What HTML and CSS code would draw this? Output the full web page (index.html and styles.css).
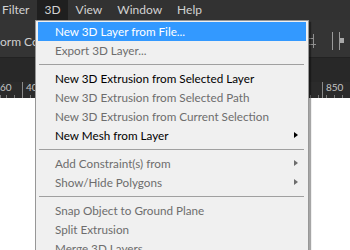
FILE: index.html
```html
<!DOCTYPE html>
<html lang="en">
<head>
    <meta charset="UTF-8">
    <meta name="viewport" content="width=device-width, initial-scale=1.0">
    <title>3D Menu</title>
    <link rel="stylesheet" href="styles.css">
</head>
<body>
    <div class="app">
        <div class="menubar">
            <span class="mb-item first">Filter</span>
            <span class="mb-item active">3D</span>
            <span class="mb-item">View</span>
            <span class="mb-item">Window</span>
            <span class="mb-item">Help</span>
        </div>

        <div class="options">
            <span class="opt-label">orm Controls</span>
            <div class="opt-icons">
                <svg class="icon-a" width="10" height="16" viewBox="0 0 10 16">
                    <path d="M6.5 1v14M1 5.5h5M1 11.5h8" stroke="#8f8f8f" stroke-width="1" fill="none"/>
                </svg>
                <svg class="icon-b" width="14" height="18" viewBox="0 0 14 18">
                    <path d="M1.5 0v18M8.5 0v18" stroke="#9a9a9a" stroke-width="1" fill="none"/>
                    <rect x="9" y="6" width="4" height="5" fill="#a8a8a8"/>
                </svg>
            </div>
        </div>

        <div class="tabs"></div>

        <div class="ruler">
            <span class="mark first" style="left: 0">60</span>
            <span class="mark" style="left: 22px">40</span>
            <span class="mark" style="left: 322px">850</span>
        </div>

        <div class="canvas"></div>

        <!-- dropdown for the 3D menu -->
        <div class="menu">
            <div class="item hover">New 3D Layer from File...</div>
            <div class="item disabled">Export 3D Layer...</div>
            <div class="sep"></div>
            <div class="item">New 3D Extrusion from Selected Layer</div>
            <div class="item disabled">New 3D Extrusion from Selected Path</div>
            <div class="item disabled">New 3D Extrusion from Current Selection</div>
            <div class="item sub">New Mesh from Layer</div>
            <div class="sep"></div>
            <div class="item disabled sub">Add Constraint(s) from</div>
            <div class="item disabled sub">Show/Hide Polygons</div>
            <div class="sep"></div>
            <div class="item disabled">Snap Object to Ground Plane</div>
            <div class="item disabled">Split Extrusion</div>
            <div class="item disabled">Merge 3D Layers</div>
        </div>
    </div>
</body>
</html>
```

FILE: styles.css
```css
body {
    margin: 0;
    width: 350px;
    height: 250px;
    overflow: hidden;
    background-color: #fff;
    font-family: Lato, "Noto Sans", sans-serif;
    font-size: 12px;
}

.app {
    position: relative;
    width: 350px;
    height: 250px;
    display: flex;
    flex-direction: column;
}

/* Top menu bar */
.menubar {
    height: 20px;
    background-color: #323232;
    display: flex;
    align-items: stretch;
    color: #d2d2d2;
    font-size: 12px;
}

.mb-item {
    padding: 0 7px;
    line-height: 19px;
    margin-right: 1px;
}

.mb-item.first {
    margin-left: -5px;
}

.mb-item.active {
    background-color: #1f1f1f;
}

/* Options bar */
.options {
    height: 37px;
    background-color: #343434;
    border-bottom: 1px solid #222;
    display: flex;
    align-items: center;
    justify-content: space-between;
    color: #cfcfcf;
}

.opt-label {
    margin-top: 6px;
    white-space: nowrap;
}

.opt-icons {
    display: flex;
    align-items: center;
    gap: 14px;
    margin-right: 5px;
    margin-top: 4px;
}

.tabs {
    height: 24px;
    background-color: #282828;
}

/* Ruler */
.ruler {
    position: relative;
    height: 16px;
    background-color: #2b2b2b;
    background-image: repeating-linear-gradient(to right, #7a7a7a 0 1px, transparent 1px 8px);
    background-size: 100% 3px;
    background-position: 6px 100%;
    background-repeat: repeat-x;
    color: #c4c4c4;
    font-size: 10px;
}

.mark {
    position: absolute;
    top: 0;
    height: 16px;
    padding-left: 3px;
    border-left: 1px solid #8a8a8a;
    line-height: 11px;
}

.mark.first {
    padding-left: 0;
    border-left: none;
}

.canvas {
    flex: 1;
    background-color: #fff;
}

/* Dropdown menu */
.menu {
    position: absolute;
    left: 35px;
    top: 20px;
    width: 268px;
    padding: 1px 2px 2px 2px;
    background-color: #f0f0f0;
    border: 1px solid #979797;
    box-shadow: 2px 2px 1px rgba(0, 0, 0, 0.35);
    font-size: 11.7px;
}

.item {
    height: 19px;
    line-height: 19px;
    padding: 0 8px 0 17px;
    color: #000;
    white-space: nowrap;
    position: relative;
}

.item.hover {
    background-color: #3399ff;
    color: #fff;
}

.item.disabled {
    color: #6d6d6d;
}

.item.sub::after {
    content: "";
    position: absolute;
    right: 8px;
    top: 6px;
    border-left: 4px solid #000;
    border-top: 3.5px solid transparent;
    border-bottom: 3.5px solid transparent;
}

.item.disabled.sub::after {
    border-left-color: #6d6d6d;
}

.sep {
    height: 1px;
    margin: 4px 2px 4px 1px;
    background-color: #a0a0a0;
}
```
